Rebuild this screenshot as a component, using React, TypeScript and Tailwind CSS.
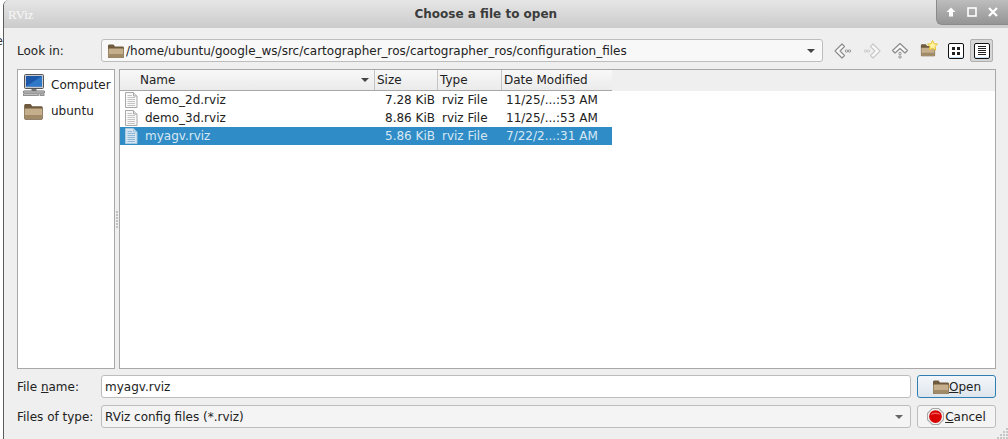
import React from 'react';

const FileIcon = ({ selected }: { selected?: boolean }) => {
  const line = selected ? '#8fb6d4' : '#c4c4c4';
  return (
    <svg width="14" height="16" viewBox="0 0 14 16" className="shrink-0">
      <path d="M1.500 .5H9.500L13 4V15.500H1.500Z" fill={selected ? '#d5e6f2' : '#f8f8f8'} stroke={selected ? '#a6c8e0' : '#a8a8a8'} />
      <path d="M9.500 .5V4H13" fill={selected ? '#b4d0e4' : '#e2e2e2'} stroke={selected ? '#a6c8e0' : '#a8a8a8'} />
      {[3, 5, 7, 9, 11, 13].map((y) => (
        <path key={y} d={`M3.500 ${y}.5H${y < 5 ? 8 : 11}`} stroke={line} />
      ))}
    </svg>
  );
};

const FolderIcon = ({ w = 18, h = 16 }: { w?: number; h?: number }) => (
  <svg width={w} height={h} viewBox="0 0 18 16" className="shrink-0">
    <path d="M1 3C1 2 1.600 1.500 2.500 1.500H6.500L8 3.500H15.500C16.400 3.500 17 4 17 5V13.500C17 14.500 16.400 15 15.500 15H2.500C1.600 15 1 14.500 1 13.500Z" fill="#6f5a3e" />
    <path d="M1.500 6.500C1.500 5.800 2 5.500 2.800 5.500H15.200C16 5.500 16.500 5.800 16.500 6.500V13.300C16.500 14 16 14.500 15.200 14.500H2.800C2 14.500 1.500 14 1.500 13.300Z" fill="#c4ae8c" />
    <path d="M1.500 11H16.500V13.300C16.500 14 16 14.500 15.200 14.500H2.800C2 14.500 1.500 14 1.500 13.300Z" fill="#a08a68" />
  </svg>
);

const ComputerIcon = () => (
  <svg width="22" height="22" viewBox="0 0 22 22" className="shrink-0">
    <rect x="1.500" y=".5" width="19" height="14" rx="1" fill="#c8ccd0" stroke="#555" />
    <rect x="3" y="2" width="16" height="10.500" fill="#1c57a8" />
    <path d="M3 12.500L19 2V12.500Z" fill="#2f78c8" />
    <rect x="8.500" y="15" width="5" height="2" fill="#777" />
    <rect x=".5" y="17" width="21" height="2" rx=".5" fill="#e8e8e8" stroke="#666" />
    <rect x=".5" y="20" width="15" height="1.500" fill="#eee" stroke="#777" strokeWidth=".8" />
    <rect x="17" y="20" width="4" height="1.500" fill="#ddd" stroke="#777" strokeWidth=".8" />
  </svg>
);

const ArrowIcon = ({ d, dots, faded }: { d: string; dots: [number, number][]; faded?: boolean }) => (
  <svg width="18" height="16" viewBox="0 0 18 16" className="shrink-0">
    <path d={d} fill="#fafafa" stroke={faded ? '#c8c8c8' : '#8c8c8c'} strokeWidth="1.200" strokeLinejoin="round" />
    {dots.map(([x, y]) => (
      <circle key={`${x}-${y}`} cx={x} cy={y} r="1.200" fill="none" stroke={faded ? '#c8c8c8' : '#8c8c8c'} strokeWidth=".9" />
    ))}
  </svg>
);

const NewFolderIcon = () => (
  <div className="relative w-[18px] h-[17px]">
    <FolderIcon w={16} h={16} />
    <svg width="11" height="11" viewBox="0 0 11 11" className="absolute right-0 top-[-2px]">
      <path d="M5.500 .5L7 3.700L10.500 4.100L8 6.500L8.700 10L5.500 8.300L2.300 10L3 6.500L.5 4.100L4 3.700Z" fill="#fff2a0" stroke="#e8c530" />
    </svg>
  </div>
);

const GridViewIcon = () => (
  <svg width="16" height="16" viewBox="0 0 16 16">
    <rect x=".5" y=".5" width="15" height="15" rx="1.500" fill="#fff" stroke="#111" />
    <path d="M1 12.500C1 14 2 15 3 15H13C14 15 15 14 15 12.500V14.500H1Z" fill="#8ec4ee" />
    <rect x="4" y="4" width="3" height="3" fill="#222" />
    <rect x="9" y="4" width="3" height="3" fill="#222" />
    <rect x="4" y="9" width="3" height="3" fill="#222" />
    <rect x="9" y="9" width="3" height="3" fill="#222" />
  </svg>
);

const ListViewIcon = () => (
  <svg width="16" height="16" viewBox="0 0 16 16">
    <rect x=".5" y=".5" width="15" height="15" rx="1.500" fill="#fff" stroke="#111" />
    <path d="M1 12.500C1 14 2 15 3 15H13C14 15 15 14 15 12.500V14.500H1Z" fill="#8ec4ee" />
    {[3, 5, 7, 9, 11].map((y) => (
      <path key={y} d={`M4 ${y}.5H12`} stroke="#222" />
    ))}
  </svg>
);

const StopIcon = () => (
  <svg width="17" height="17" viewBox="0 0 16 16" className="shrink-0">
    <path d="M5 .5H11L15.500 5V11L11 15.500H5L.5 11V5Z" fill="#f2f2f2" stroke="#a8a8a8" />
    <circle cx="8" cy="8" r="6" fill="#d90000" />
    <path d="M3.500 6.500C4.500 3.500 11.500 3.500 12.500 6.500C10 5.500 6 5.500 3.500 6.500Z" fill="#ee6060" />
  </svg>
);

const Caret = ({ color = '#444' }: { color?: string }) => (
  <svg width="8" height="4" viewBox="0 0 8 4" className="shrink-0">
    <path d="M0 0H8L4 4Z" fill={color} />
  </svg>
);

const SizeGrip = () => (
  <svg width="11" height="11" viewBox="0 0 11 11" className="absolute right-0 bottom-0">
    {[[9, 0], [6, 3], [9, 3], [3, 6], [6, 6], [9, 6], [0, 9], [3, 9], [6, 9], [9, 9]].map(([x, y]) => (
      <rect key={`${x}-${y}`} x={x} y={y} width="2" height="2" fill="#c6c6c6" />
    ))}
  </svg>
);

const rows = [
  { name: 'demo_2d.rviz', size: '7.28 KiB', date: '11/25/...:53 AM' },
  { name: 'demo_3d.rviz', size: '8.86 KiB', date: '11/25/...:53 AM' },
  { name: 'myagv.rviz', size: '5.86 KiB', date: '7/22/2...:31 AM', selected: true },
];

const headerCell = 'h-full flex items-center border-r border-[#c4c4c4]';

export default function App() {
  return (
    <div className="relative w-[1008px] h-[439px] flex bg-white overflow-hidden text-[12px] text-[#222] font-['DejaVu_Sans',sans-serif]">
      <div className="w-[3px] shrink-0 flex justify-end overflow-hidden pt-[32px] text-[#333]">
        <span className="shrink-0">e</span>
      </div>
      <div className="flex-1 flex flex-col bg-[#efefef] border-l border-[#5c5c5c] rounded-tl-md overflow-hidden">
        {/* Title bar */}
        <div className="h-[28px] shrink-0 flex items-center justify-between bg-gradient-to-b from-[#e6e6e6] to-[#cbcbcb]">
          <span className="ml-[4px] text-[13px] leading-none font-['Liberation_Serif',serif] text-[#f8f8f8]">RViz</span>
          <span className="ml-[2px] text-[12px] font-bold text-[#3c3c3c]">Choose a file to open</span>
          <div className="w-[72px] h-[25px] self-start flex items-center justify-center gap-[11px] rounded-bl-md bg-gradient-to-b from-[#bdbdbd] to-[#959595] border-l border-b border-[#8a8a8a]">
            <svg width="10" height="10" viewBox="0 0 10 10">
              <path d="M5 .5L9.500 5H7V9.500H3V5H.5Z" fill="#fff" />
            </svg>
            <svg width="10" height="10" viewBox="0 0 10 10">
              <rect x="1" y="1" width="8" height="8" fill="none" stroke="#fff" strokeWidth="1.600" />
            </svg>
            <svg width="10" height="10" viewBox="0 0 10 10">
              <path d="M1 1L9 9M9 1L1 9" stroke="#fff" strokeWidth="2.200" />
            </svg>
          </div>
        </div>

        <div className="flex-1 flex flex-col pl-[13px] pr-[12px] pt-[11px] pb-[11px]">
          {/* Look in row */}
          <div className="h-[23px] flex items-center">
            <span className="w-[84px]">Look in:</span>
            <div className="w-[722px] h-full flex items-center pl-[5px] pr-[7px] bg-[#f8f8f8] border border-[#bdbdbd] rounded-[3px]">
              <FolderIcon />
              <span className="ml-px flex-1 truncate">/home/ubuntu/google_ws/src/cartographer_ros/cartographer_ros/configuration_files</span>
              <Caret />
            </div>
            <div className="ml-[9px] flex items-center">
              <div className="w-[22px] flex justify-center">
                <ArrowIcon d="M8 1L1 8L8 15L10.500 12.500L6 8L10.500 3.500Z" dots={[[12.500, 8], [15.500, 8]]} />
              </div>
              <div className="ml-[7px] w-[22px] flex justify-center">
                <ArrowIcon d="M10 1L17 8L10 15L7.500 12.500L12 8L7.500 3.500Z" dots={[[2.500, 8], [5.500, 8]]} faded />
              </div>
              <div className="ml-[6px] w-[22px] flex justify-center">
                <ArrowIcon d="M9 .5L16.500 7.500L14 10L9 5.500L4 10L1.500 7.500Z" dots={[[9, 10.500], [9, 14]]} />
              </div>
              <div className="ml-[7px] w-[22px] flex justify-center">
                <NewFolderIcon />
              </div>
              <div className="ml-[4px] w-[23px] h-[23px] flex items-center justify-center">
                <GridViewIcon />
              </div>
              <div className="ml-[3px] w-[23px] h-[23px] flex items-center justify-center bg-[#d6d6d6] border border-[#b0b0b0] rounded-[2px]">
                <ListViewIcon />
              </div>
            </div>
          </div>

          {/* Sidebar and file list */}
          <div className="mt-[7px] h-[300px] flex">
            <div className="w-[98px] bg-white border border-[#a8a8a8] pt-[2px] pl-[5px]">
              <div className="h-[26px] flex items-center gap-[6px]">
                <ComputerIcon />
                <span>Computer</span>
              </div>
              <div className="h-[26px] flex items-center gap-[7px]">
                <FolderIcon w={21} h={19} />
                <span>ubuntu</span>
              </div>
            </div>
            {/* splitter handle */}
            <div className="w-[4px] flex flex-col items-center justify-center gap-px">
              {[0, 1, 2, 3, 4, 5].map((i) => (
                <span key={i} className="w-[2px] h-[2px] bg-[#c2c2c2]" />
              ))}
            </div>
            <div className="flex-1 bg-white border border-[#a8a8a8]">
              <div className="h-[21px] bg-[#efefef]">
                <div className="w-[492px] flex h-full bg-gradient-to-b from-[#f8f8f8] to-[#ebebeb] border-b border-[#a8a8a8]">
                  <div className={`${headerCell} w-[255px] pl-[20px] pr-[5px] justify-between`}>
                    <span>Name</span>
                    <Caret />
                  </div>
                  <div className={`${headerCell} w-[63px] pl-[2px]`}>Size</div>
                  <div className={`${headerCell} w-[64px] pl-[2px]`}>Type</div>
                  <div className="h-full flex items-center w-[110px] pl-[2px]">Date Modified</div>
                </div>
              </div>
              {rows.map((row) => (
                <div key={row.name} className={`w-[492px] h-[18px] flex items-center ${row.selected ? 'bg-[#308cc6] text-[#d7e8f4]' : ''}`}>
                  <div className="w-[255px] pl-[4px] flex items-center gap-[7px]">
                    <FileIcon selected={row.selected} />
                    <span>{row.name}</span>
                  </div>
                  <div className="w-[60px] text-right">{row.size}</div>
                  <div className="ml-[7px] w-[63px]">rviz File</div>
                  <div className="ml-px">{row.date}</div>
                </div>
              ))}
            </div>
          </div>

          {/* File name */}
          <div className="mt-[6px] h-[23px] flex items-center">
            <span className="w-[84px]">File <span className="underline">n</span>ame:</span>
            <div className="w-[810px] h-full flex items-center pl-[3px] bg-white border border-[#bdbdbd] rounded-[3px]">myagv.rviz</div>
            <button className="ml-[6px] w-[79px] h-full flex items-center justify-center bg-gradient-to-b from-[#f4f7fa] to-[#dde5ec] border border-[#2f7fb5] rounded-[3px]">
              <FolderIcon />
              <span className="-ml-px"><span className="underline">O</span>pen</span>
            </button>
          </div>

          {/* Files of type */}
          <div className="mt-[7px] h-[23px] flex items-center">
            <span className="w-[84px]">Files of type:</span>
            <div className="w-[810px] h-full flex items-center justify-between pl-[3px] pr-[7px] bg-[#f4f4f4] border border-[#bdbdbd] rounded-[3px]">
              <span>RViz config files (*.rviz)</span>
              <Caret color="#666" />
            </div>
            <button className="ml-[6px] w-[79px] h-full flex items-center justify-center gap-px bg-[#f4f4f4] border border-[#bdbdbd] rounded-[3px]">
              <StopIcon />
              <span><span className="underline">C</span>ancel</span>
            </button>
          </div>
        </div>
      </div>
      <SizeGrip />
    </div>
  );
}
